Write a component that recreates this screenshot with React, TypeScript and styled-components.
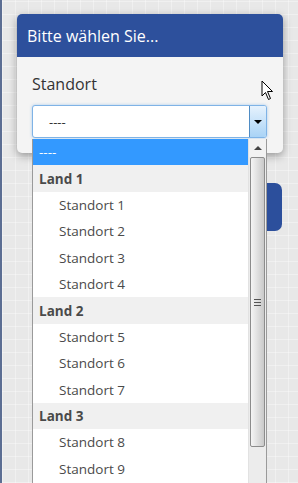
import { createGlobalStyle, styled } from 'styled-components';

const GlobalStyle = createGlobalStyle`
    html, body {
        margin: 0;
        padding: 0;
        font-family: "Open Sans", "Liberation Sans", sans-serif;
    }
`;

const Page = styled.div`
    position: relative;
    width: 298px;
    height: 483px;
    box-sizing: border-box;
    overflow: hidden;
    border-left: 2px solid #5c6e93;
    background-color: #e8e8e8;
    background-image:
        repeating-linear-gradient(0deg, rgba(255, 255, 255, 0.35) 0 1px, transparent 1px 13px),
        repeating-linear-gradient(90deg, rgba(255, 255, 255, 0.35) 0 1px, transparent 1px 13px);
    padding-top: 183px;
    display: flex;
    flex-direction: column;
    align-items: flex-end;
`;

const PageButton = styled.div`
    width: 90px;
    height: 48px;
    margin-right: 16px;
    border-radius: 7px;
    background: #2c4f9c;
`;

const Modal = styled.div`
    position: absolute;
    left: 15px;
    top: 14px;
    width: 266px;
    border-radius: 5px;
    overflow: hidden;
    background: #f4f4f4;
    box-shadow: 0 3px 9px rgba(0, 0, 0, 0.35);
`;

const Header = styled.div`
    height: 43px;
    display: flex;
    align-items: center;
    padding-left: 10px;
    background: #2d509c;
    color: #fff;
    font-size: 16px;
`;

const Body = styled.div`
    padding: 16px 16px 15px 15px;
    display: flex;
    flex-direction: column;
    gap: 10px;
`;

const Label = styled.div`
    font-size: 16px;
    line-height: 22px;
    color: #333;
`;

const SelectBox = styled.div`
    height: 33px;
    box-sizing: border-box;
    display: flex;
    align-items: stretch;
    background: #fff;
    border: 1px solid #7fb3e6;
    border-radius: 3px;
    box-shadow: 0 0 3px rgba(90, 160, 230, 0.5);
`;

const SelectValue = styled.div`
    flex: 1;
    display: flex;
    align-items: center;
    padding-left: 16px;
    font-size: 13px;
    color: #333;
`;

const ArrowButton = styled.div`
    width: 16px;
    display: flex;
    align-items: center;
    justify-content: center;
    border-left: 1px solid #4f8cc4;
    background: linear-gradient(#e6f2fd, #a9d3f6);
    border-radius: 0 2px 2px 0;
`;

const Triangle = styled.div<{ $up?: boolean; $color?: string }>`
    width: 0;
    height: 0;
    border-left: 4px solid transparent;
    border-right: 4px solid transparent;
    ${(p) =>
        p.$up
            ? `border-bottom: 4px solid ${p.$color ?? '#000'};`
            : `border-top: 4px solid ${p.$color ?? '#000'};`}
`;

const Dropdown = styled.div`
    position: absolute;
    left: 30px;
    top: 139px;
    width: 235px;
    height: 360px;
    box-sizing: border-box;
    display: flex;
    background: #fff;
    border: 1px solid #9a9a9a;
    border-top: none;
`;

const OptionList = styled.div`
    flex: 1;
    display: flex;
    flex-direction: column;
    overflow: hidden;
`;

const Option = styled.div<{ $kind: 'selected' | 'group' | 'item' }>`
    flex: none;
    height: 26.4px;
    display: flex;
    align-items: center;
    font-size: 13.5px;
    padding-left: ${(p) => (p.$kind === 'item' ? 26 : 6)}px;
    font-weight: ${(p) => (p.$kind === 'group' ? 700 : 400)};
    color: ${(p) => (p.$kind === 'selected' ? '#fff' : '#4a4a4a')};
    background: ${(p) =>
        p.$kind === 'selected' ? '#3399ff' : p.$kind === 'group' ? '#f0f0f0' : '#fff'};
`;

const Scrollbar = styled.div`
    width: 17px;
    display: flex;
    flex-direction: column;
    background: #ececec;
    border-left: 1px solid #e2e2e2;
`;

const ScrollArrow = styled.div`
    height: 18px;
    display: flex;
    align-items: center;
    justify-content: center;
    background: #f2f2f2;
`;

const Thumb = styled.div`
    height: 288px;
    margin: 0 1px;
    display: flex;
    align-items: center;
    justify-content: center;
    border: 1px solid #8c8c8c;
    border-radius: 2px;
    background: linear-gradient(90deg, #f5f5f5 0%, #e4e4e4 40%, #c9c9c9 100%);
`;

const Grip = styled.div`
    width: 7px;
    height: 7px;
    background: repeating-linear-gradient(#555 0 1px, transparent 1px 3px);
`;

const Cursor = styled.svg`
    position: absolute;
    left: 259px;
    top: 80px;
`;

const options: { kind: 'selected' | 'group' | 'item'; text: string }[] = [
    { kind: 'selected', text: '----' },
    { kind: 'group', text: 'Land 1' },
    { kind: 'item', text: 'Standort 1' },
    { kind: 'item', text: 'Standort 2' },
    { kind: 'item', text: 'Standort 3' },
    { kind: 'item', text: 'Standort 4' },
    { kind: 'group', text: 'Land 2' },
    { kind: 'item', text: 'Standort 5' },
    { kind: 'item', text: 'Standort 6' },
    { kind: 'item', text: 'Standort 7' },
    { kind: 'group', text: 'Land 3' },
    { kind: 'item', text: 'Standort 8' },
    { kind: 'item', text: 'Standort 9' },
];

export default function App() {
    return (
        <>
            <GlobalStyle />
            <Page>
                <PageButton />
                <Modal>
                    <Header>Bitte wählen Sie...</Header>
                    <Body>
                        <Label>Standort</Label>
                        <SelectBox>
                            <SelectValue>----</SelectValue>
                            <ArrowButton>
                                <Triangle />
                            </ArrowButton>
                        </SelectBox>
                    </Body>
                </Modal>
                <Dropdown>
                    <OptionList>
                        {options.map((o, i) => (
                            <Option key={i} $kind={o.kind}>
                                {o.text}
                            </Option>
                        ))}
                    </OptionList>
                    <Scrollbar>
                        <ScrollArrow>
                            <Triangle $up $color="#444" />
                        </ScrollArrow>
                        <Thumb>
                            <Grip />
                        </Thumb>
                    </Scrollbar>
                </Dropdown>
                <Cursor width="14" height="22" viewBox="0 0 14 22">
                    <path
                        d="M1 1 L1 16 L4.5 12.5 L7.5 19.5 L9.5 18.5 L6.5 11.5 L11.5 11.5 Z"
                        fill="#fff"
                        stroke="#000"
                        strokeWidth="1"
                        strokeLinejoin="miter"
                    />
                </Cursor>
            </Page>
        </>
    );
}
